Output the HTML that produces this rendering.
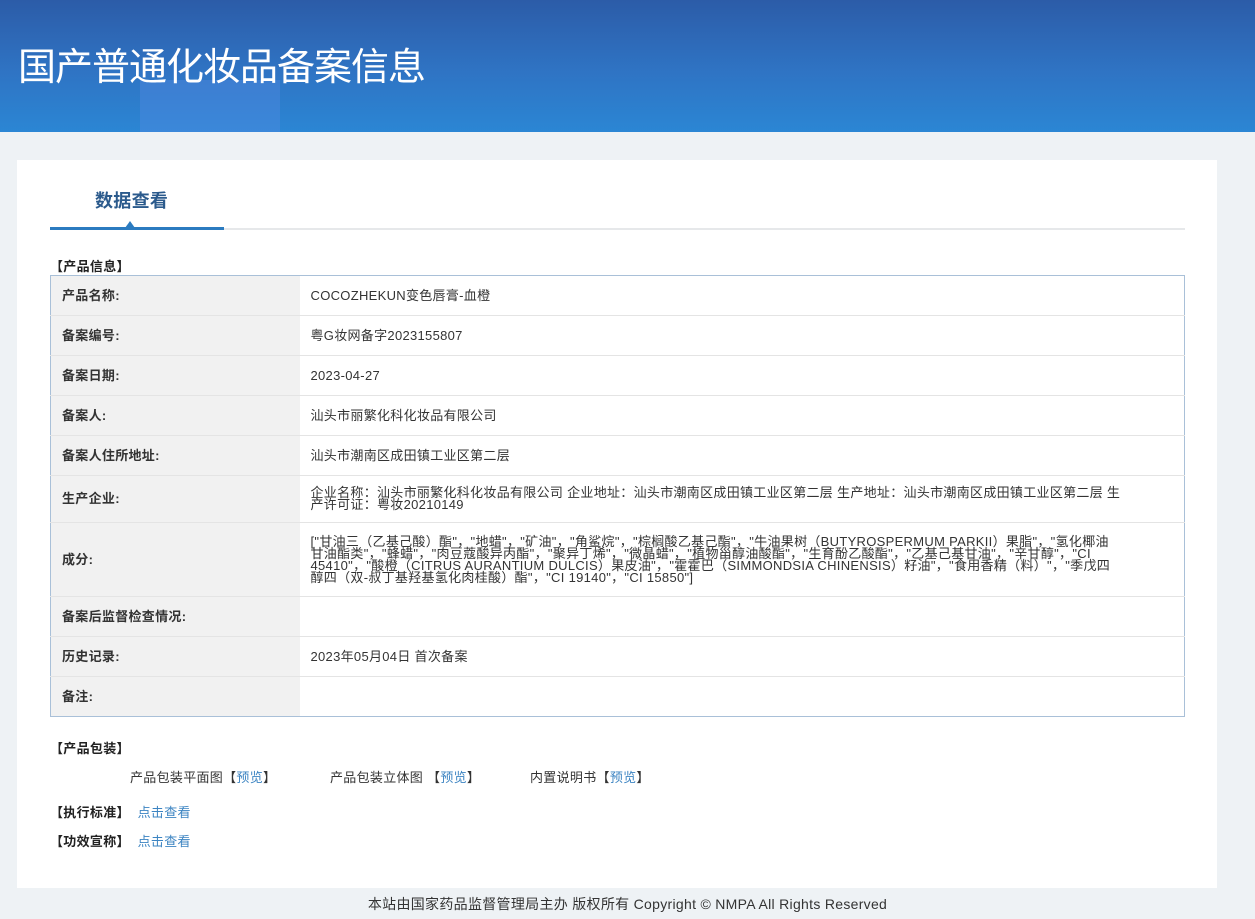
<!DOCTYPE html>
<html><head><meta charset="utf-8"><style>
*{margin:0;padding:0;box-sizing:border-box}
body{width:1255px;height:919px;background:#eef2f5;font-family:"Liberation Sans","Noto Sans CJK SC",sans-serif;font-size:13px;letter-spacing:0.3px;color:#333;position:relative;overflow:hidden}
.hd{position:absolute;left:0;top:0;width:1255px;height:132px;background:linear-gradient(180deg,#2c5ca8 0%,#2f74c4 55%,#2b86d4 100%);overflow:hidden}
.hd h1{position:absolute;left:18px;top:36px;font-size:38px;font-weight:normal;color:#fff;letter-spacing:-1px;font-family:"Noto Sans CJK SC",sans-serif}
.deco{position:absolute;left:140px;top:80px;width:140px;height:60px;background:rgba(90,140,230,.35)}
.card{position:absolute;left:17px;top:160px;width:1200px;height:728px;background:#fff}
.tab{position:absolute;left:95px;top:187px;font-size:18px;font-weight:bold;color:#2b5a8c;font-family:"Noto Sans CJK SC",sans-serif}
.line{position:absolute;left:50px;top:228px;width:1135px;height:2px;background:#e6e8ea}
.line2{position:absolute;left:50px;top:227px;width:174px;height:3px;background:#2b7bc0}
.tri{position:absolute;left:125px;top:221px;width:0;height:0;border-left:5px solid transparent;border-right:5px solid transparent;border-bottom:7px solid #2b7bc0}
.sec{position:absolute;left:50px;font-weight:bold;color:#222}
table{position:absolute;left:50px;top:275px;width:1135px;border-collapse:collapse;border:1px solid #a9c0d8}
td{border-bottom:1px solid #e4e4e4;vertical-align:middle;line-height:12px}
td.l{width:249px;background:#f1f1f1;font-weight:bold;padding-left:11px;color:#333}
td.v{padding-left:11px;padding-right:62px;color:#333}
a{color:#3c84c2;text-decoration:none}
.ft{position:absolute;left:0;top:894px;width:1255px;text-align:center;font-size:14px;letter-spacing:0.3px;color:#333}
</style></head><body>
<div class="hd"><div class="deco"></div><h1>国产普通化妆品备案信息</h1></div>
<div class="card"></div>
<div class="tab">数据查看</div>
<div class="line"></div><div class="line2"></div><div class="tri"></div>
<div class="sec" style="top:256px">【产品信息】</div>
<table>
<tr style="height:40px"><td class="l">产品名称:</td><td class="v">COCOZHEKUN变色唇膏-血橙</td></tr>
<tr style="height:40px"><td class="l">备案编号:</td><td class="v">粤G妆网备字2023155807</td></tr>
<tr style="height:40px"><td class="l">备案日期:</td><td class="v">2023-04-27</td></tr>
<tr style="height:40px"><td class="l">备案人:</td><td class="v">汕头市丽繁化科化妆品有限公司</td></tr>
<tr style="height:40px"><td class="l">备案人住所地址:</td><td class="v">汕头市潮南区成田镇工业区第二层</td></tr>
<tr style="height:47px"><td class="l">生产企业:</td><td class="v">企业名称：汕头市丽繁化科化妆品有限公司 企业地址：汕头市潮南区成田镇工业区第二层 生产地址：汕头市潮南区成田镇工业区第二层 生产许可证：粤妆20210149</td></tr>
<tr style="height:74px"><td class="l">成分:</td><td class="v">["甘油三（乙基己酸）酯"，"地蜡"，"矿油"，"角鲨烷"，"棕榈酸乙基己酯"，"牛油果树（BUTYROSPERMUM PARKII）果脂"，"氢化椰油甘油酯类"，"蜂蜡"，"肉豆蔻酸异丙酯"，"聚异丁烯"，"微晶蜡"，"植物甾醇油酸酯"，"生育酚乙酸酯"，"乙基己基甘油"，"辛甘醇"，"CI 45410"，"酸橙（CITRUS AURANTIUM DULCIS）果皮油"，"霍霍巴（SIMMONDSIA CHINENSIS）籽油"，"食用香精（料）"，"季戊四醇四（双-叔丁基羟基氢化肉桂酸）酯"，"CI 19140"，"CI 15850"]</td></tr>
<tr style="height:40px"><td class="l">备案后监督检查情况:</td><td class="v"></td></tr>
<tr style="height:40px"><td class="l">历史记录:</td><td class="v">2023年05月04日 首次备案</td></tr>
<tr style="height:40px"><td class="l" style="border-bottom:none">备注:</td><td class="v" style="border-bottom:none"></td></tr>
</table>
<div class="sec" style="top:738px">【产品包装】</div>
<div style="position:absolute;left:130px;top:767px">产品包装平面图【<a>预览</a>】</div>
<div style="position:absolute;left:330px;top:767px">产品包装立体图 【<a>预览</a>】</div>
<div style="position:absolute;left:530px;top:767px">内置说明书【<a>预览</a>】</div>
<div class="sec" style="top:802px">【执行标准】 &nbsp;<a style="font-weight:normal">点击查看</a></div>
<div class="sec" style="top:831px">【功效宣称】 &nbsp;<a style="font-weight:normal">点击查看</a></div>
<div class="ft">本站由国家药品监督管理局主办 版权所有 Copyright © NMPA All Rights Reserved</div>
</body></html>
